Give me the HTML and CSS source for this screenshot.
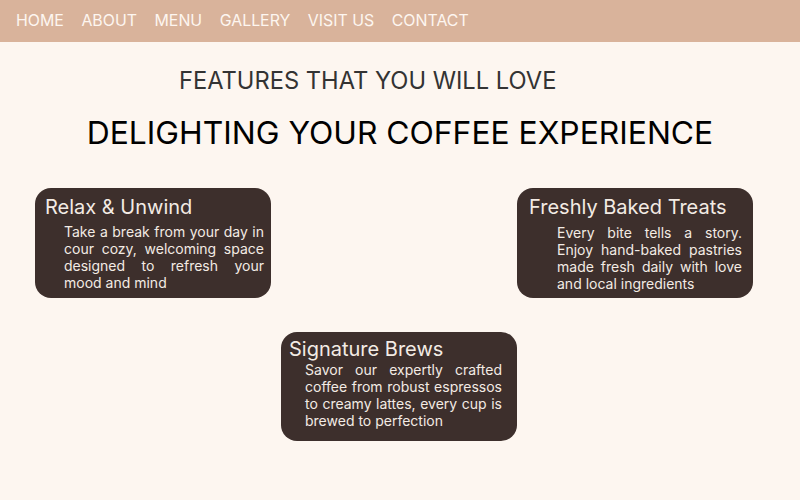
FILE: index.html
```html
<!DOCTYPE html>
<html lang="en">
<head>
<meta charset="utf-8">
<title>Coffee</title>
<link rel="stylesheet" href="styles.css">
</head>
<body>
<nav class="nav">
  <a class="nav-link" href="#">HOME</a>
  <a class="nav-link" href="#">ABOUT</a>
  <a class="nav-link" href="#">MENU</a>
  <a class="nav-link" href="#">GALLERY</a>
  <a class="nav-link" href="#">VISIT US</a>
  <a class="nav-link" href="#">CONTACT</a>
</nav>
<main class="features">
  <h2 class="eyebrow">FEATURES THAT YOU WILL LOVE</h2>
  <h1 class="title">DELIGHTING YOUR COFFEE EXPERIENCE</h1>
  <div class="row row-top">
    <div class="card card-relax">
      <h3 class="card-title">Relax &amp; Unwind</h3>
      <p class="card-text">Take a break from your day in cour cozy, welcoming space designed to refresh your mood and mind</p>
    </div>
    <div class="card card-baked">
      <h3 class="card-title">Freshly Baked Treats</h3>
      <p class="card-text">Every bite tells a story. Enjoy hand-baked pastries made fresh daily with love and local ingredients</p>
    </div>
  </div>
  <div class="row row-bottom">
    <div class="card card-brews">
      <h3 class="card-title">Signature Brews</h3>
      <p class="card-text">Savor our expertly crafted coffee from robust espressos to creamy lattes, every cup is brewed to perfection</p>
    </div>
  </div>
</main>
</body>
</html>
```
FILE: styles.css
```css
* { box-sizing: border-box; }
html, body { margin: 0; padding: 0; }
body {
  background: #fdf6f0;
  font-family: Inter, "Noto Sans", sans-serif;
  width: 800px;
  height: 500px;
  overflow: hidden;
}
.nav {
  background: #d9b39b;
  height: 42px;
  display: flex;
  align-items: center;
  gap: 17.5px;
  padding-left: 16px;
}
.nav-link {
  color: #fdf6f0;
  text-decoration: none;
  font-size: 15.9px;
  line-height: 20px;
}
.features {
  padding-top: 24px;
}
.eyebrow {
  margin: 0 0 0 179px;
  font-size: 23.7px;
  font-weight: 400;
  line-height: 30px;
  color: #333;
}
.title {
  margin: 15px 0 0;
  text-align: center;
  font-size: 31.8px;
  font-weight: 400;
  line-height: 44px;
  color: #000;
}
.row {
  display: flex;
}
.row-top {
  margin-top: 33px;
  padding: 0 47px 0 35px;
  justify-content: space-between;
}
.row-bottom {
  margin-top: 34px;
  padding-left: 281px;
}
.card {
  width: 236px;
  height: 110px;
  background: #3d2f2c;
  border-radius: 16px;
  color: #f3ebe4;
  padding-top: 7px;
}
.card-title {
  margin: 0;
  font-size: 20px;
  font-weight: 400;
  line-height: 24px;
}
.card-text {
  margin: 4px 0 0;
  font-size: 14px;
  line-height: 17px;
  text-align: justify;
}
.card-relax { padding-left: 10px; padding-right: 7px; }
.card-relax .card-text { padding-left: 19px; }
.card-baked { padding-left: 12px; padding-right: 11px; }
.card-baked .card-text { padding-left: 28px; margin-top: 5px; }
.card-brews { padding-left: 8px; padding-right: 15px; padding-top: 5px; height: 109px; }
.card-brews .card-text { padding-left: 16px; margin-top: 0; }
```
